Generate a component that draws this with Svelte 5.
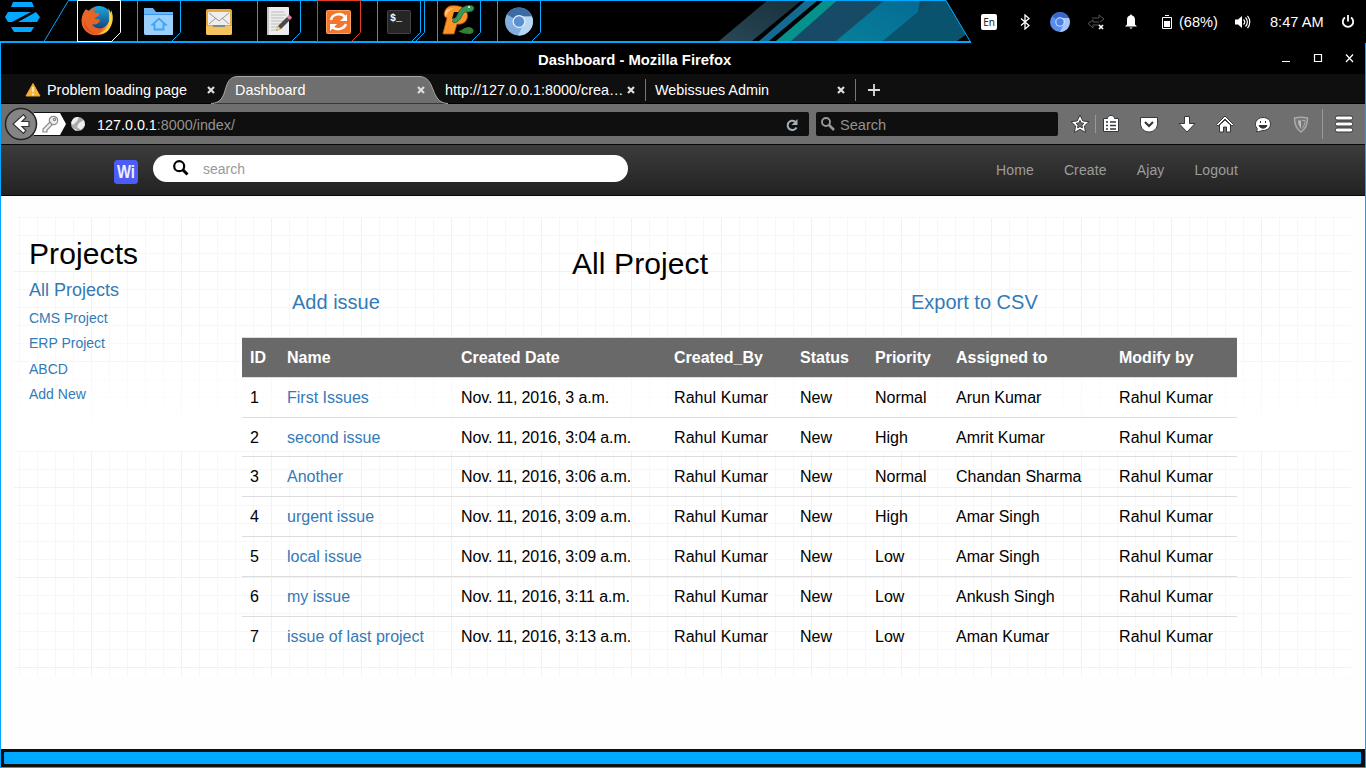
<script>
  const heads = ['ID', 'Name', 'Created Date', 'Created_By', 'Status', 'Priority', 'Assigned to', 'Modify by'];
  const widths = [37, 174, 213, 126, 75, 81, 163, 126];
  const rows = [
    ['First Issues', '3 a.m.', 'Normal', 'Arun Kumar'],
    ['second issue', '3:04 a.m.', 'High', 'Amrit Kumar'],
    ['Another', '3:06 a.m.', 'Normal', 'Chandan Sharma'],
    ['urgent issue', '3:09 a.m.', 'High', 'Amar Singh'],
    ['local issue', '3:09 a.m.', 'Low', 'Amar Singh'],
    ['my issue', '3:11 a.m.', 'Low', 'Ankush Singh'],
    ['issue of last project', '3:13 a.m.', 'Low', 'Aman Kumar']
  ];
  const projects = ['CMS Project', 'ERP Project', 'ABCD', 'Add New'];
  const apps = ['firefox', 'files', 'mail', 'editor', 'update', 'terminal', 'pycharm', 'chromium'];
  const tabs = [
    { title: 'Problem loading page', warn: true },
    { title: 'Dashboard', active: true },
    { title: 'http://127.0.0.1:8000/crea…' },
    { title: 'Webissues Admin', sep: true }
  ];
  const frame = { firefox: '#fff', update: '#e03c28' };
</script>

{#snippet appIcon(name)}
  {#if name === 'firefox'}
    <circle cx="22" cy="19" r="13" fill="url(#ffBlue)" />
    <path d="M9 9c-5 6-6 14-2 20 6 9 21 8 26-1 3-5 4-12 1-18 0 3-1 4-1 6 0 8-6 14-13 12-3-1-4-2-5-4 3 1 6 0 8-3 0-2-2-2-5-2 0-2 2-2 4-4l0-2c-2 0-4 0-5-1 0-2 1-3 2-4-3 0-5 1-6 3-2-1-4-1-4-2z" fill="url(#ffFox)" />
    <path d="M31 8c5 6 5 15 1 20-2 4-6 6-11 6 8-3 12-9 11-17 0-3 0-6-1-9z" fill="#ffd33c" opacity=".9" />
    <path d="M8 20c0 6 4 11 10 13-7 0-12-6-10-13z" fill="#d83a20" opacity=".6" />
  {:else if name === 'files'}
    <path d="M7 8h9l3 4h17v23H9a2 2 0 0 1-2-2z" fill="#6cb6f4" />
    <path d="M7 15h29v18a2 2 0 0 1-2 2H9a2 2 0 0 1-2-2z" fill="#9bd0fb" />
    <path d="M7 14.500h29" stroke="#4095e8" />
    <path d="M17.500 24.500v5h9v-5h2L22 18.700l-6.500 5.800z" fill="none" stroke="#3ba4f5" stroke-width="1.800" />
  {:else if name === 'mail'}
    <rect x="9" y="9" width="26" height="26" rx="2" fill="#e8a93c" />
    <path d="M9 26h26v7a2 2 0 0 1-2 2H11a2 2 0 0 1-2-2z" fill="#f5c45e" />
    <path d="M11 12h22v13h-5v2H16v-2h-5z" fill="#eee" />
    <path d="M12 13l10 8 10-8M12 24l7-6m6 0l7 6" fill="none" stroke="#999" />
    <path d="M16 26h12" stroke="#888" stroke-width="2" />
  {:else if name === 'editor'}
    <rect x="10" y="7" width="22" height="28" rx="1" fill="#ededed" />
    <path d="M11 7v28" stroke="#c5c5c5" stroke-width="2" />
    <path d="M14 12h13M14 15h15M14 18h13M14 21h14M14 24h10M14 27h7M14 30h6" stroke="#bbb" />
    <path d="M19 31l2-5 9-9 3 3-9 9z" fill="#4a4a4a" />
    <path d="M19 31l2-5 3 3z" fill="#e8d37a" />
    <path d="M30 17l2-2.500 3 3-2 2.500z" fill="#e27aa7" />
  {:else if name === 'update'}
    <rect x="9.500" y="10.500" width="24" height="23" rx="1" fill="#f4762c" stroke="#ffa063" />
    <path d="M14 20c1-6 10-8 14-3m1 7c-2 5-9 7-14 3" fill="none" stroke="#fff" stroke-width="2.500" />
    <path d="M30 14v7h-7zM13 31v-7h7z" fill="#fff" />
  {:else if name === 'terminal'}
    <rect x="10.500" y="10.500" width="23" height="23" rx="1" fill="#262626" stroke="#444" />
    <text x="13" y="21" font-size="10" font-weight="bold" fill="#fff">$_</text>
  {:else if name === 'pycharm'}
    <path d="M6 33l4-15c-5-1-3-10 3-12 6-1 15 0 17 7 2 7-3 12-10 11l-3 10H6z" fill="#ff9528" stroke="#b85005" stroke-width=".8" />
    <path d="M11 9c-3 1-4 5-2 7 2-4 4-6 8-8z" fill="#ffc476" />
    <path d="M17 12h6c0 4-4 6-8 7z" fill="#080808" />
    <path d="M17 23c-2-1-2-3 0-4 4-2 3-8 8-11 5-4 12-3 12 0 0 4-5 4-8 4-5 0-3 9-12 11z" fill="#35985a" stroke="#175a2d" stroke-width=".7" />
    <circle cx="32" cy="7" r="1" fill="#fff" />
    <path d="M21 31c4 0 6-4 11-4 6 1 6 6 1 7-5 0-9-1-12-3z" fill="#327f39" />
  {:else}
    <circle cx="22" cy="21.500" r="14" fill="#83aedd" />
    <path d="M22 21.500L10 14.500A14 14 0 0 1 35 16.500H22z" fill="#3c6aa3" />
    <path d="M22 16.500h13a14 14 0 0 1-14 19l6-12z" fill="#b9d6f3" />
    <circle cx="22" cy="21.500" r="6.500" fill="#eaf3fd" />
    <circle cx="22" cy="21.500" r="5.200" fill="#5a8fd2" />
  {/if}
{/snippet}

<div class="desktop">
  <header class="panel">
    <svg class="start" width="77" height="43" viewBox="0 0 77 43">
      <path d="M13 2h19l2 5H11zM8 12h23L12 22H8l-3-5zM18 22l18-10 4 5-3 5zM11 27h23l-3 5H14z" fill="#00a8ff" />
      <path d="M44 41.500L68.500.5H77" fill="none" stroke="#00a8ff" />
      <path d="M0 42h77" stroke="#00a8ff" stroke-width="2" />
    </svg>
    {#each apps as app}
      <svg width="60" height="43" viewBox="0 0 60 43">
        <defs>
          <linearGradient id="ffBlue" x2="0" y2="1"><stop stop-color="#1fa8dc" /><stop offset="1" stop-color="#12356f" /></linearGradient>
          <linearGradient id="ffFox" x2="1" y2="0"><stop stop-color="#e9662a" /><stop offset=".6" stop-color="#e8601f" /><stop offset="1" stop-color="#ffcf35" /></linearGradient>
        </defs>
        <path d="M0 .5h60" stroke="#00a8ff" />
        <path d="M0 42h60" stroke="#00a8ff" stroke-width="2" />
        {#if app !== 'mail'}
          <path d="M.5 41.500V.5h43v32l-9 9" fill="none" stroke={frame[app] ?? '#00a8ff'} />
          {#if frame[app]}<path d="M0 41.500h35" stroke={frame[app]} />{/if}
          {#if app === 'terminal'}<path d="M47.500 0v32.500l-9 9" fill="none" stroke="#00a8ff" />{/if}
        {/if}
        {@render appIcon(app)}
      </svg>
    {/each}
    <svg width="414" height="43" viewBox="557 0 414 43">
      <defs>
        <linearGradient id="s1" x1="0" y1="1" x2="1" y2="0"><stop stop-color="#294758" /><stop offset="1" stop-color="#183039" /></linearGradient>
        <linearGradient id="s2"><stop stop-color="#174a69" /><stop offset="1" stop-color="#154a5e" /></linearGradient>
        <linearGradient id="s3" y1="1" y2="0"><stop stop-color="#087f99" /><stop offset="1" stop-color="#046b95" /></linearGradient>
      </defs>
      <path d="M719 41l49-41h34l-50 41z" fill="url(#s1)" />
      <path d="M759 41l47-41h12l-49 41z" fill="#146a90" />
      <path d="M776 41l48-41h14l-46 41z" fill="#07918c" />
      <path d="M791 41l47-41h108l24 41z" fill="url(#s2)" />
      <path d="M836 41l49-41h35l-2 12-35 29z" fill="url(#s3)" />
      <path d="M883 41l50-41h13l20 34-9 7z" fill="#0a536f" />
      <path d="M957 41l10-7 4 7z" fill="#000" />
      <path d="M557 .5h389L970.500 42" fill="none" stroke="#00a8ff" />
      <path d="M557 42h414" stroke="#00a8ff" stroke-width="2" />
    </svg>
    <div class="tray">
      <span class="lang">En</span>
      <svg width="12" height="16" viewBox="0 0 12 16"><path d="M2 4.500l8 7-4 3.500V1l4 3.500-8 7" fill="none" stroke="#fff" stroke-width="1.300" /></svg>
      <svg width="20" height="20" viewBox="0 0 20 20"><circle cx="10" cy="10" r="10" fill="#5b8def" /><path d="M10 10L2 4a10 10 0 0 1 17 2h-9z" fill="#3b67cc" /><path d="M10 6h9a10 10 0 0 1-9 14l4-8z" fill="#a8c5fb" /><circle cx="10" cy="10" r="4.700" fill="#dce8fe" /><circle cx="10" cy="10" r="3.700" fill="#4a82ee" /></svg>
      <svg width="18" height="16" viewBox="0 0 18 16"><path d="M5 4h7V1l5 4-4 3M13 11H6v3L1 9.500 6 6v2h6" fill="none" stroke="#555" /><path d="M12 11l4 4m0-4l-4 4" stroke="#fff" stroke-width="1.700" /></svg>
      <svg width="14" height="16" viewBox="0 0 14 16"><path d="M1 12.500l2-2V6c0-3 1-4 3-4.500a1 1 0 0 1 2 0c2 .5 3 2 3 4.500v4.500l2 2zM5.500 13.500h3c0 1.500-3 1.500-3 0z" fill="#fff" /></svg>
      <svg class="battery" width="10" height="14" viewBox="0 0 10 14"><path d="M.5 2.500h9v11h-9zM3 .5h4" fill="none" stroke="#fff" /><path d="M2 6h6v6H2z" fill="#fff" /></svg>
      <span class="pct">(68%)</span>
      <svg width="16" height="14" viewBox="0 0 16 14"><path d="M0 4.500h3L7 1v12L3 9.500H0z" fill="#fff" /><path d="M8.500 4.500c1.500 1.500 1.500 3.500 0 5M10.500 2.500c2.500 2.500 2.500 6.500 0 9M12.500.8c3 3.500 3 9 0 12.400" fill="none" stroke="#fff" stroke-width="1.200" /></svg>
      <span class="clock">8:47 AM</span>
      <svg width="14" height="14" viewBox="0 0 14 14"><path d="M4 2.500a5.200 5.200 0 1 0 6 0M7 0v6.500" fill="none" stroke="#fff" stroke-width="1.800" /></svg>
    </div>
  </header>

  <section class="window">
    <div class="titlebar">
      <span>Dashboard - Mozilla Firefox</span>
      <svg width="76" height="14" viewBox="0 0 76 14"><path d="M4 10.500h8" stroke="#fff" /><path d="M36.500 3.500h7v7h-7z" fill="none" stroke="#fff" stroke-width="1.200" /><path d="M68 3.500l7 7.500m0-7.500l-7 7.500" stroke="#fff" stroke-width="1.300" /></svg>
    </div>

    <div class="tabs">
      {#each tabs as tab}
        <div class="tab" class:sep={tab.sep}>
          {#if tab.active}
            <svg class="shape" width="242" height="30" viewBox="0 0 242 30"><path d="M0 29.500C20 29 9 2.500 27 2.500h181c18 0 10 26.500 29 27z" fill="#6f6f6f" /><path d="M0 29.500C20 29 9 2.500 27 2.500h181c18 0 10 26.500 29 27" fill="none" stroke="#a9a9a9" /></svg>
          {/if}
          {#if tab.warn}
            <svg class="warn" width="16" height="16" viewBox="0 0 16 16"><path d="M8 1.500L15 14H1z" fill="#f8b43c" stroke="#f2a32d" stroke-linejoin="round" /><path d="M8 5v5M8 11.500v2" stroke="#fff3d0" stroke-width="1.600" /></svg>
          {/if}
          <span>{tab.title}</span>
          <svg class="x" width="8" height="8" viewBox="0 0 8 8"><path d="M1 1l6 6m0-6L1 7" stroke="#ddd" stroke-width="2.200" /></svg>
        </div>
      {/each}
      <svg class="plus" width="36" height="29" viewBox="0 0 36 29"><path d="M.5 5v22" stroke="#777" /><path d="M13 16h12M19 10v12" stroke="#ddd" stroke-width="1.800" /></svg>
    </div>

    <div class="toolbar">
      <svg width="91" height="40" viewBox="1 0 91 40">
        <path d="M34 8h58v24H34z" fill="#0f0f0f" />
        <path d="M34 9h26l6 11-6 11H34z" fill="#fff" />
        <g fill="#eee" stroke="#8c8c8c" stroke-width="1.200"><circle cx="53.500" cy="16.500" r="4.200" /><path d="M50 18l-7 7v3h4v-2l5-5z" /><circle cx="54.500" cy="15.500" r="1.200" /></g>
        <circle cx="78" cy="20" r="7" fill="#aaa" /><path d="M73 15c2-2 4-2 6-2l-2 4-4 4-2-2zM79 19l5-3 1 5-4 5-4-3zM73 24l4 2-1 1z" fill="#eee" />
        <circle cx="21" cy="20" r="15.500" fill="#858585" stroke="#222" stroke-width="1.500" />
        <path d="M29 17.500h-7l4-4-2.500-3L13 20l10.500 9.500 2.500-3-4-4h7z" fill="#fff" stroke="#333" stroke-width="1.200" />
      </svg>
      <div class="url"><b>127.0.0.1</b>:8000/index/
        <svg width="14" height="14" viewBox="0 0 14 14"><path d="M11.500 9.500A4.700 4.700 0 1 1 10 3.500" fill="none" stroke="#a5b0bd" stroke-width="2" /><path d="M12.500 1v6h-6z" fill="#a5b0bd" /></svg>
      </div>
      <div class="find">
        <svg width="14" height="14" viewBox="0 0 14 14"><circle cx="5" cy="5" r="4" fill="none" stroke="#999" stroke-width="1.900" /><path d="M8 8l5 5" stroke="#999" stroke-width="2.500" /></svg>Search
      </div>
      <svg width="307" height="40" viewBox="1058 0 307 40">
        <g fill="#fff" stroke="#35383c">
          <path d="M1080 11l2.800 5.900 6.200.8-4.600 4.300 1.200 6.400-5.600-3-5.600 3 1.200-6.400-4.600-4.300 6.200-.8z" />
          <path d="M1080 16.500l1.200 2.400 2.700.5-2 1.800.5 2.600-2.400-1.200-2.400 1.200.5-2.600-2-1.800 2.700-.5z" fill="#6f6f6f" />
          <path d="M1103.500 14.500h4c0-4 7-4 7 0h4v13h-15z" />
          <path d="M1106 18h2m2 0h6M1106 21.500h2m2 0h6M1106 25h2m2 0h6" stroke-width="1.600" />
          <path d="M1140.500 13.500h17v6c0 5-4 8.500-8.500 8.500s-8.500-3.500-8.500-8.500z" />
          <path d="M1145 18l4 4 4-4" fill="none" stroke="#333" stroke-width="2" />
          <path d="M1184.500 12.500h5v7h5.500l-8 8.500-8-8.500h5.500z" />
          <path d="M1219.500 21v7h4v-5h3v5h4v-7l-5.500-5z" />
          <path d="M1216.500 20.500l8.500-8.500 8.500 8.500-1.500 1.500-7-7-7 7z" />
          <path d="M1263 13.500c4.500 0 7.500 3 7.500 6.500s-3 6.500-7.500 6.500c-2 0-3 1.500-7 1 1.500-1.500 1.500-2 1.200-3-4-4-1-11 5.800-11z" />
        </g>
        <path d="M1260.500 17v2m5-2v2M1259 21.500h8c-1 3.500-7 3.500-8 0z" fill="#333" stroke="#333" />
        <path d="M1294.500 14c4-1 9-1 13 0 0 6-2 11-6.500 14-4.500-3-6.500-8-6.500-14z" fill="#777" stroke="#aaa" stroke-width="1.500" />
        <path d="M1298 16.500h3v8c-2-2-3-5-3-8z" fill="#bbb" /><path d="M1302 16.500h3c0 3-1 6-3 8" fill="none" stroke="#aaa" />
        <path d="M1095.500 11v18M1322.500 5v30" stroke="#999" />
        <g fill="#fff" stroke="#33363a"><rect x="1335.500" y="12" width="17" height="4" rx="1.500" /><rect x="1335.500" y="18" width="17" height="4" rx="1.500" /><rect x="1335.500" y="24" width="17" height="4" rx="1.500" /></g>
      </svg>
    </div>

    <nav class="navbar">
      <svg class="logo" width="24" height="24" viewBox="0 0 24 24"><rect width="24" height="24" rx="3.500" fill="#4b5cf7" /><text x="3" y="18" textLength="18" lengthAdjust="spacingAndGlyphs" font-size="18" font-weight="bold" fill="#eef">Wi</text></svg>
      <div class="search">
        <svg width="16" height="16" viewBox="0 0 16 16"><circle cx="6.200" cy="6.200" r="5" fill="none" stroke="#000" stroke-width="2.200" /><path d="M10 10l4.500 4.500" stroke="#000" stroke-width="3" /></svg>search
      </div>
      <div class="links"><a href="#home">Home</a><a href="#create">Create</a><a href="#user">Ajay</a><a href="#logout">Logout</a></div>
    </nav>

    <main>
      <div class="panelbody">
        <svg class="grid" width="1337" height="459" viewBox="14 217 1337 459">
          <defs>
            <pattern id="cols" x="1" y="217" width="90" height="459" patternUnits="userSpaceOnUse">
              <path d="M18.500 0v459M36.500 0v459M54.500 0v459M72.500 0v459" stroke="#f7f7f7" /><path d="M.5 0v459" stroke="#f1f1f1" />
            </pattern>
            <pattern id="rowsA" x="14" y="181" width="1337" height="90" patternUnits="userSpaceOnUse">
              <path d="M0 18.500h1337M0 36.500h1337M0 54.500h1337M0 72.500h1337" stroke="#f7f7f7" /><path d="M0 .5h1337" stroke="#f1f1f1" />
            </pattern>
            <pattern id="rowsB" x="14" y="397" width="1337" height="90" patternUnits="userSpaceOnUse">
              <path d="M0 18.500h1337M0 36.500h1337M0 54.500h1337M0 72.500h1337" stroke="#f7f7f7" /><path d="M0 .5h1337" stroke="#f1f1f1" />
            </pattern>
            <linearGradient id="fade" x2="0" y2="1"><stop stop-color="#fff" stop-opacity="0" /><stop offset="1" stop-color="#fff" /></linearGradient>
          </defs>
          <rect x="14" y="217" width="1337" height="459" fill="url(#cols)" />
          <rect x="14" y="217" width="1337" height="234" fill="url(#rowsA)" />
          <rect x="14" y="451" width="1337" height="225" fill="url(#rowsB)" />
          <rect x="14" y="325" width="1337" height="115" fill="url(#fade)" />
          <rect x="14" y="440" width="1337" height="11" fill="#fff" />
        </svg>
        <aside>
          <h2>Projects</h2>
          <a class="all" href="#all">All Projects</a>
          {#each projects as p}<a href="#project">{p}</a>{/each}
        </aside>
        <section class="issues">
          <h2>All Project</h2>
          <div class="actions"><a href="#add">Add issue</a><a href="#csv">Export to CSV</a></div>
          <table>
            <colgroup>{#each widths as w}<col style="width:{w}px" />{/each}</colgroup>
            <thead><tr>{#each heads as h}<th>{h}</th>{/each}</tr></thead>
            <tbody>
              {#each rows as r, i}
                <tr><td>{i + 1}</td><td><a href="#issue">{r[0]}</a></td><td class="date">Nov. 11, 2016, {r[1]}</td><td class="name">Rahul Kumar</td><td>New</td><td>{r[2]}</td><td>{r[3]}</td><td class="name">Rahul Kumar</td></tr>
              {/each}
            </tbody>
          </table>
        </section>
      </div>
    </main>
    <footer><div></div></footer>
  </section>
</div>

<style>
  :global(body) { margin: 0; overflow: hidden; background: #000; }
  .desktop { width: 1366px; height: 768px; display: flex; flex-direction: column; background: #000; font-family: "Liberation Sans", Arial, sans-serif; color: #000; overflow: hidden; }
  .desktop * { box-sizing: border-box; }
  svg { display: block; flex: none; }
  a { color: #337ab7; text-decoration: none; }
  .panel { height: 43px; display: flex; flex: none; color: #fff; }
  .panel text { font-family: "Liberation Mono", monospace; }
  .tray { width: 395px; display: grid; grid-template-columns: 36px 35px 36px 36px 34px 31px 43px 42px 66px 36px; align-items: center; justify-items: center; font-size: 14.600px; }
  .lang { width: 16px; height: 16px; border-radius: 2px; background: #fff; color: #222; font: 10px/17px "Noto Sans", sans-serif; text-align: center; }
  .battery { justify-self: end; margin-right: 7px; }
  .pct { justify-self: start; }
  .clock { justify-self: start; padding-left: 6px; white-space: nowrap; }
  .window { flex: 1; display: flex; flex-direction: column; border: solid #00a8ff; border-width: 0 1px 1px; min-height: 0; }
  .titlebar { height: 31px; flex: none; display: flex; align-items: center; color: #fff; font-size: 14.800px; font-weight: bold; padding: 2px 11px 0 537px; justify-content: space-between; }
  .titlebar svg { margin-top: -4px; }
  .tabs { height: 30px; flex: none; display: flex; background: #0f0f0f; border-bottom: 1px solid #000; padding-left: 14px; color: #fff; font-size: 14.400px; }
  .tab { width: 210px; position: relative; display: flex; align-items: center; padding: 2px 10px 0; white-space: nowrap; }
  .tab span { position: relative; }
  .tab .x { margin-left: auto; position: relative; }
  .warn { margin-right: 6px; }
  .shape { position: absolute; left: -14px; top: 0; }
  .sep::before { content: ""; position: absolute; left: 0; top: 5px; height: 22px; width: 1px; background: #777; }
  .toolbar { height: 40px; flex: none; display: flex; align-items: center; background: #6f6f6f; }
  .url { width: 717px; height: 24px; margin-right: 7px; background: #0f0f0f; border-radius: 0 2px 2px 0; color: #929292; font-size: 14.350px; padding: 2px 0 0 5px; display: flex; align-items: center; }
  .url b { color: #fff; font-weight: normal; }
  .url svg { margin: -1px 10px 0 auto; }
  .find { width: 242px; height: 24px; background: #0f0f0f; border-radius: 2px; color: #929292; font-size: 14.600px; display: flex; align-items: center; gap: 5px; padding: 2px 0 0 5px; }
  .find svg { margin-top: -3px; }
  .navbar { height: 52px; flex: none; display: flex; align-items: flex-start; background: linear-gradient(#3c3c3c, #222); border: solid #080808; border-width: 1px 0; padding-left: 113px; }
  .logo { margin-top: 15px; }
  .search { width: 475px; height: 27px; margin: 10px 0 0 15px; border-radius: 14px; background: #fff; color: #999; font-size: 14px; display: flex; align-items: center; padding-left: 20px; gap: 14px; }
  .search svg { margin-top: -2px; }
  .links { margin: 17px 0 0 368px; display: flex; gap: 30px; font-size: 14px; line-height: 16px; letter-spacing: .13px; }
  .links a { color: #9d9d9d; }
  main { flex: 1; min-height: 0; background: #fefefe; padding: 21px 14px 0 13px; }
  .panelbody { position: relative; height: 459px; display: flex; background: #fff; }
  .grid { position: absolute; left: 0; top: 0; }
  aside { position: relative; width: 228px; padding: 20px 0 0 15px; display: flex; flex-direction: column; font-size: 14px; line-height: 25.400px; }
  h2 { font-size: 30px; font-weight: normal; line-height: 33px; margin: 0; letter-spacing: .1px; }
  .all { font-size: 18px; line-height: 20px; margin: 10px 0 6px; }
  .issues { position: relative; width: 995px; padding-top: 30px; }
  .issues h2 { padding-left: 330px; }
  .actions { display: flex; font-size: 20px; line-height: 22px; padding: 11px 0 24px 50px; }
  .actions a { width: 619px; flex: none; }
  .actions a:last-child { width: auto; }
  table { width: 995px; table-layout: fixed; border-collapse: collapse; font-size: 16px; line-height: 1.42857; }
  th, td { padding: 8.860px 8px 7.140px; text-align: left; border-top: 1px solid #ddd; white-space: nowrap; }
  .date { letter-spacing: -.12px; }
  .name { letter-spacing: .08px; }
  th { background: #696969; color: #fff; }
  footer { height: 18px; flex: none; background: #0f0f0f; padding: 3px 4px 3px 3px; }
  footer div { height: 12px; border-radius: 1px; background: #00a8ff; }
</style>
